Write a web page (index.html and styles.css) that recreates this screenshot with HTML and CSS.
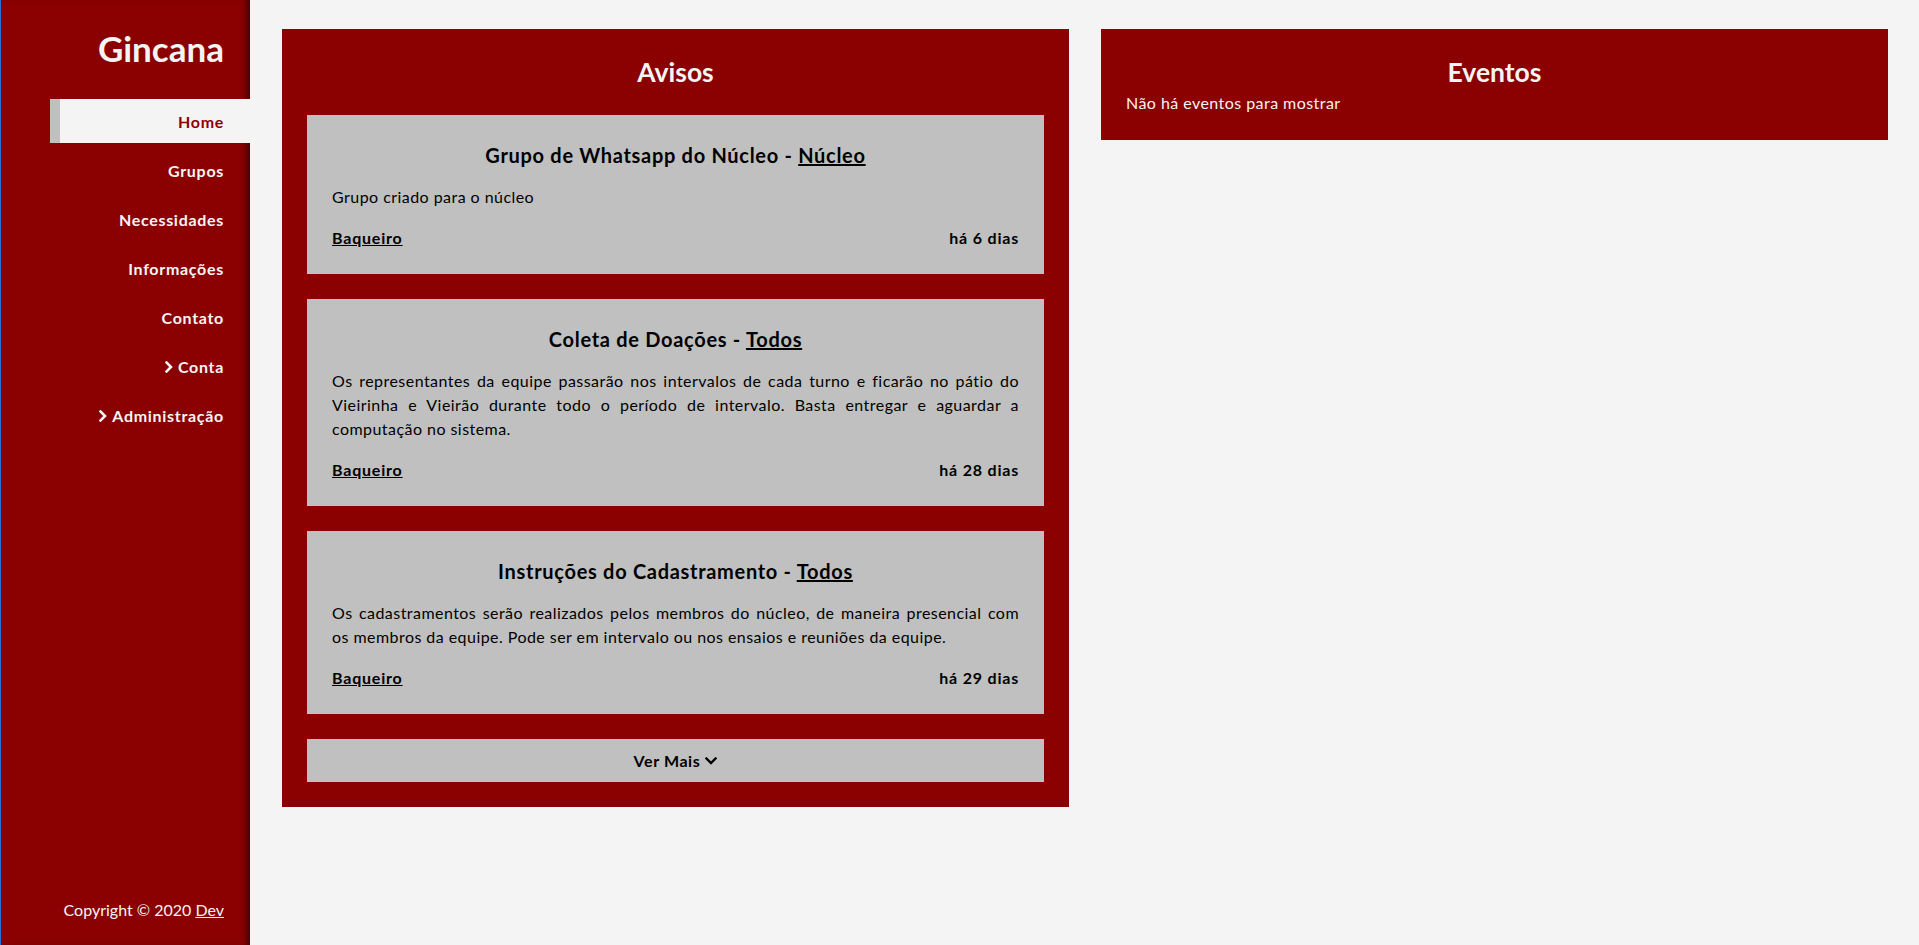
FILE: index.html
```html
<!DOCTYPE html>
<html lang="pt-BR">
<head>
<meta charset="utf-8">
<title>Gincana</title>
<link rel="stylesheet" href="styles.css">
</head>
<body>
<aside class="sidebar">
  <h1 class="brand">Gincana</h1>
  <nav class="nav">
    <a class="nav-item active" href="#">Home</a>
    <a class="nav-item" href="#">Grupos</a>
    <a class="nav-item" href="#">Necessidades</a>
    <a class="nav-item" href="#">Informações</a>
    <a class="nav-item" href="#">Contato</a>
    <a class="nav-item" href="#"><svg class="chev-r" viewBox="0 0 8 12" width="8" height="12"><path d="M1.5 1.5 L6 6 L1.5 10.5" fill="none" stroke="currentColor" stroke-width="2.6" stroke-linecap="square"/></svg>Conta</a>
    <a class="nav-item" href="#"><svg class="chev-r" viewBox="0 0 8 12" width="8" height="12"><path d="M1.5 1.5 L6 6 L1.5 10.5" fill="none" stroke="currentColor" stroke-width="2.6" stroke-linecap="square"/></svg>Administração</a>
  </nav>
  <p class="copyright">Copyright © 2020 <a href="#">Dev</a></p>
</aside>
<main class="main">
  <section class="panel">
    <h2 class="panel-title">Avisos</h2>
    <article class="card">
      <h3 class="card-title">Grupo de Whatsapp do Núcleo - <a href="#">Núcleo</a></h3>
      <p class="card-text">Grupo criado para o núcleo</p>
      <div class="card-foot"><a href="#">Baqueiro</a><span>há 6 dias</span></div>
    </article>
    <article class="card">
      <h3 class="card-title">Coleta de Doações - <a href="#">Todos</a></h3>
      <p class="card-text">Os representantes da equipe passarão nos intervalos de cada turno e ficarão no pátio do Vieirinha e Vieirão durante todo o período de intervalo. Basta entregar e aguardar a computação no sistema.</p>
      <div class="card-foot"><a href="#">Baqueiro</a><span>há 28 dias</span></div>
    </article>
    <article class="card">
      <h3 class="card-title">Instruções do Cadastramento - <a href="#">Todos</a></h3>
      <p class="card-text">Os cadastramentos serão realizados pelos membros do núcleo, de maneira presencial com os membros da equipe. Pode ser em intervalo ou nos ensaios e reuniões da equipe.</p>
      <div class="card-foot"><a href="#">Baqueiro</a><span>há 29 dias</span></div>
    </article>
    <button class="more" type="button">Ver Mais <svg class="chev-d" viewBox="0 0 12 8" width="12" height="8"><path d="M1.5 1.5 L6 6 L10.5 1.5" fill="none" stroke="currentColor" stroke-width="2.4" stroke-linecap="square"/></svg></button>
  </section>
  <section class="panel">
    <h2 class="panel-title">Eventos</h2>
    <p class="empty">Não há eventos para mostrar</p>
  </section>
</main>
</body>
</html>
```
FILE: styles.css
```css
* { box-sizing: border-box; }
html, body { height: 100%; }
body {
  margin: 0;
  display: flex;
  min-height: 100vh;
  background: #f4f4f4;
  font-family: Lato, "Open Sans", sans-serif;
  font-size: 16px;
  line-height: 24px;
  letter-spacing: 0.45px;
  color: #000;
}
a { color: inherit; }

.sidebar {
  width: 250px;
  flex: none;
  display: flex;
  flex-direction: column;
  background: #8b0000;
  border-left: 1px solid #2c6fd8;
  box-shadow: inset -7px 0 6px -4px rgba(0,0,0,0.55);
  color: #f4f4f4;
}
.brand {
  margin: 26px 26px 29px 0;
  font-size: 35px;
  line-height: 44px;
  font-weight: 700;
  letter-spacing: 0;
  text-align: right;
}
.nav {
  display: flex;
  flex-direction: column;
  gap: 5px;
  padding-left: 49px;
}
.nav-item {
  display: flex;
  align-items: center;
  justify-content: flex-end;
  gap: 5px;
  height: 44px;
  padding-top: 2px;
  padding-right: 26px;
  font-weight: 700;
  letter-spacing: 0.7px;
  text-decoration: none;
  color: #f4f4f4;
}
.nav-item.active {
  background: #f4f4f4;
  color: #8b0000;
  border-left: 10px solid #c0c0c0;
}
.chev-r { display: block; }
.copyright {
  margin: auto 26px 23px 0;
  letter-spacing: 0;
  text-align: right;
}

.main {
  flex: 1;
  display: grid;
  grid-template-columns: 1fr 1fr;
  gap: 32px;
  align-items: start;
  padding: 29px 31px 0 32px;
}
.panel {
  background: #8b0000;
  padding: 25px;
  color: #f4f4f4;
}
.panel-title {
  margin: 0;
  font-size: 26.5px;
  line-height: 36px;
  font-weight: 700;
  letter-spacing: 0;
  text-align: center;
}
.empty { margin: 0; padding-top: 1px; }

.card {
  margin-top: 25px;
  background: #c0c0c0;
  padding: 25px 25px 24px;
  color: #000;
}
.card-title {
  margin: 0 0 15px;
  font-size: 20px;
  line-height: 30px;
  font-weight: 700;
  letter-spacing: 0.7px;
  text-align: center;
}
.card-text {
  margin: 0 0 17px;
  text-align: justify;
}
.card-foot {
  display: flex;
  justify-content: space-between;
  font-weight: 700;
  letter-spacing: 0.8px;
}
.more {
  display: flex;
  align-items: center;
  justify-content: center;
  gap: 5px;
  width: 100%;
  margin-top: 25px;
  padding: 10px;
  border: 0;
  background: #c0c0c0;
  font: inherit;
  font-weight: 700;
  letter-spacing: 0.6px;
  line-height: 23px;
  color: #000;
}
.chev-d { display: block; margin-top: 1px; }
```
